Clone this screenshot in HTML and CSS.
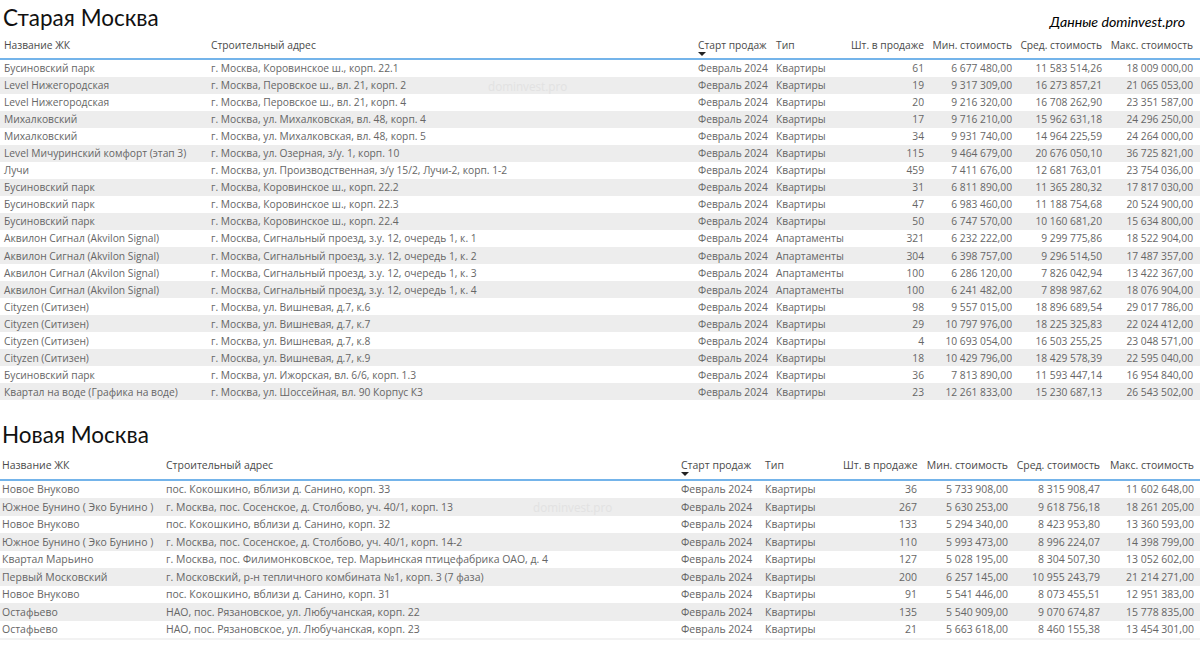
FILE: index.html
```html
<!DOCTYPE html>
<html lang="ru">
<head>
<meta charset="utf-8">
<title>Старая и Новая Москва</title>
<link rel="stylesheet" href="styles.css">
</head>
<body>
<section class="report old">
  <header class="title-bar">
    <h1>Старая Москва</h1>
    <p class="source">Данные dominvest.pro</p>
  </header>
  <div class="head row">
    <span>Название ЖК</span><span>Строительный адрес</span><span class="sorted">Старт продаж</span><span>Тип</span><span class="num">Шт. в продаже</span><span class="num">Мин. стоимость</span><span class="num">Сред. стоимость</span><span class="num">Макс. стоимость</span>
  </div>
  <div class="body">
    <span class="mark">dominvest.pro</span>
    <div class="row"><span>Бусиновский парк</span><span>г. Москва, Коровинское ш., корп. 22.1</span><span>Февраль 2024</span><span>Квартиры</span><span class="num">61</span><span class="num">6 677 480,00</span><span class="num">11 583 514,26</span><span class="num">18 009 000,00</span></div>
    <div class="row"><span>Level Нижегородская</span><span>г. Москва, Перовское ш., вл. 21, корп. 2</span><span>Февраль 2024</span><span>Квартиры</span><span class="num">19</span><span class="num">9 317 309,00</span><span class="num">16 273 857,21</span><span class="num">21 065 053,00</span></div>
    <div class="row"><span>Level Нижегородская</span><span>г. Москва, Перовское ш., вл. 21, корп. 4</span><span>Февраль 2024</span><span>Квартиры</span><span class="num">20</span><span class="num">9 216 320,00</span><span class="num">16 708 262,90</span><span class="num">23 351 587,00</span></div>
    <div class="row"><span>Михалковский</span><span>г. Москва, ул. Михалковская, вл. 48, корп. 4</span><span>Февраль 2024</span><span>Квартиры</span><span class="num">17</span><span class="num">9 716 210,00</span><span class="num">15 962 631,18</span><span class="num">24 296 250,00</span></div>
    <div class="row"><span>Михалковский</span><span>г. Москва, ул. Михалковская, вл. 48, корп. 5</span><span>Февраль 2024</span><span>Квартиры</span><span class="num">34</span><span class="num">9 931 740,00</span><span class="num">14 964 225,59</span><span class="num">24 264 000,00</span></div>
    <div class="row"><span>Level Мичуринский комфорт (этап 3)</span><span>г. Москва, ул. Озерная, з/у. 1, корп. 10</span><span>Февраль 2024</span><span>Квартиры</span><span class="num">115</span><span class="num">9 464 679,00</span><span class="num">20 676 050,10</span><span class="num">36 725 821,00</span></div>
    <div class="row"><span>Лучи</span><span>г. Москва, ул. Производственная, з/у 15/2, Лучи-2, корп. 1-2</span><span>Февраль 2024</span><span>Квартиры</span><span class="num">459</span><span class="num">7 411 676,00</span><span class="num">12 681 763,01</span><span class="num">23 754 036,00</span></div>
    <div class="row"><span>Бусиновский парк</span><span>г. Москва, Коровинское ш., корп. 22.2</span><span>Февраль 2024</span><span>Квартиры</span><span class="num">31</span><span class="num">6 811 890,00</span><span class="num">11 365 280,32</span><span class="num">17 817 030,00</span></div>
    <div class="row"><span>Бусиновский парк</span><span>г. Москва, Коровинское ш., корп. 22.3</span><span>Февраль 2024</span><span>Квартиры</span><span class="num">47</span><span class="num">6 983 460,00</span><span class="num">11 188 754,68</span><span class="num">20 524 900,00</span></div>
    <div class="row"><span>Бусиновский парк</span><span>г. Москва, Коровинское ш., корп. 22.4</span><span>Февраль 2024</span><span>Квартиры</span><span class="num">50</span><span class="num">6 747 570,00</span><span class="num">10 160 681,20</span><span class="num">15 634 800,00</span></div>
    <div class="row"><span>Аквилон Сигнал (Akvilon Signal)</span><span>г. Москва, Сигнальный проезд, з.у. 12, очередь 1, к. 1</span><span>Февраль 2024</span><span>Апартаменты</span><span class="num">321</span><span class="num">6 232 222,00</span><span class="num">9 299 775,86</span><span class="num">18 522 904,00</span></div>
    <div class="row"><span>Аквилон Сигнал (Akvilon Signal)</span><span>г. Москва, Сигнальный проезд, з.у. 12, очередь 1, к. 2</span><span>Февраль 2024</span><span>Апартаменты</span><span class="num">304</span><span class="num">6 398 757,00</span><span class="num">9 296 514,50</span><span class="num">17 487 357,00</span></div>
    <div class="row"><span>Аквилон Сигнал (Akvilon Signal)</span><span>г. Москва, Сигнальный проезд, з.у. 12, очередь 1, к. 3</span><span>Февраль 2024</span><span>Апартаменты</span><span class="num">100</span><span class="num">6 286 120,00</span><span class="num">7 826 042,94</span><span class="num">13 422 367,00</span></div>
    <div class="row"><span>Аквилон Сигнал (Akvilon Signal)</span><span>г. Москва, Сигнальный проезд, з.у. 12, очередь 1, к. 4</span><span>Февраль 2024</span><span>Апартаменты</span><span class="num">100</span><span class="num">6 241 482,00</span><span class="num">7 898 987,62</span><span class="num">18 076 904,00</span></div>
    <div class="row"><span>Cityzen (Ситизен)</span><span>г. Москва, ул. Вишневая, д.7, к.6</span><span>Февраль 2024</span><span>Квартиры</span><span class="num">98</span><span class="num">9 557 015,00</span><span class="num">18 896 689,54</span><span class="num">29 017 786,00</span></div>
    <div class="row"><span>Cityzen (Ситизен)</span><span>г. Москва, ул. Вишневая, д.7, к.7</span><span>Февраль 2024</span><span>Квартиры</span><span class="num">29</span><span class="num">10 797 976,00</span><span class="num">18 225 325,83</span><span class="num">22 024 412,00</span></div>
    <div class="row"><span>Cityzen (Ситизен)</span><span>г. Москва, ул. Вишневая, д.7, к.8</span><span>Февраль 2024</span><span>Квартиры</span><span class="num">4</span><span class="num">10 693 054,00</span><span class="num">16 503 255,25</span><span class="num">23 048 571,00</span></div>
    <div class="row"><span>Cityzen (Ситизен)</span><span>г. Москва, ул. Вишневая, д.7, к.9</span><span>Февраль 2024</span><span>Квартиры</span><span class="num">18</span><span class="num">10 429 796,00</span><span class="num">18 429 578,39</span><span class="num">22 595 040,00</span></div>
    <div class="row"><span>Бусиновский парк</span><span>г. Москва, ул. Ижорская, вл. 6/6, корп. 1.3</span><span>Февраль 2024</span><span>Квартиры</span><span class="num">36</span><span class="num">7 813 890,00</span><span class="num">11 593 447,14</span><span class="num">16 954 840,00</span></div>
    <div class="row"><span>Квартал на воде (Графика на воде)</span><span>г. Москва, ул. Шоссейная, вл. 90 Корпус К3</span><span>Февраль 2024</span><span>Квартиры</span><span class="num">23</span><span class="num">12 261 833,00</span><span class="num">15 230 687,13</span><span class="num">26 543 502,00</span></div>
  </div>
</section>
<section class="report new">
  <header class="title-bar">
    <h1>Новая Москва</h1>
  </header>
  <div class="head row">
    <span>Название ЖК</span><span>Строительный адрес</span><span class="sorted">Старт продаж</span><span>Тип</span><span class="num">Шт. в продаже</span><span class="num">Мин. стоимость</span><span class="num">Сред. стоимость</span><span class="num">Макс. стоимость</span>
  </div>
  <div class="body">
    <span class="mark">dominvest.pro</span>
    <div class="row"><span>Новое Внуково</span><span>пос. Кокошкино, вблизи д. Санино, корп. 33</span><span>Февраль 2024</span><span>Квартиры</span><span class="num">36</span><span class="num">5 733 908,00</span><span class="num">8 315 908,47</span><span class="num">11 602 648,00</span></div>
    <div class="row"><span>Южное Бунино ( Эко Бунино )</span><span>г. Москва, пос. Сосенское, д. Столбово, уч. 40/1, корп. 13</span><span>Февраль 2024</span><span>Квартиры</span><span class="num">267</span><span class="num">5 630 253,00</span><span class="num">9 618 756,18</span><span class="num">18 261 205,00</span></div>
    <div class="row"><span>Новое Внуково</span><span>пос. Кокошкино, вблизи д. Санино, корп. 32</span><span>Февраль 2024</span><span>Квартиры</span><span class="num">133</span><span class="num">5 294 340,00</span><span class="num">8 423 953,80</span><span class="num">13 360 593,00</span></div>
    <div class="row"><span>Южное Бунино ( Эко Бунино )</span><span>г. Москва, пос. Сосенское, д. Столбово, уч. 40/1, корп. 14-2</span><span>Февраль 2024</span><span>Квартиры</span><span class="num">110</span><span class="num">5 993 473,00</span><span class="num">8 996 224,07</span><span class="num">14 398 799,00</span></div>
    <div class="row"><span>Квартал Марьино</span><span>г. Москва, пос. Филимонковское, тер. Марьинская птицефабрика ОАО, д. 4</span><span>Февраль 2024</span><span>Квартиры</span><span class="num">127</span><span class="num">5 028 195,00</span><span class="num">8 304 507,30</span><span class="num">13 052 602,00</span></div>
    <div class="row"><span>Первый Московский</span><span>г. Московский, р-н тепличного комбината №1, корп. 3 (7 фаза)</span><span>Февраль 2024</span><span>Квартиры</span><span class="num">200</span><span class="num">6 257 145,00</span><span class="num">10 955 243,79</span><span class="num">21 214 271,00</span></div>
    <div class="row"><span>Новое Внуково</span><span>пос. Кокошкино, вблизи д. Санино, корп. 31</span><span>Февраль 2024</span><span>Квартиры</span><span class="num">91</span><span class="num">5 541 446,00</span><span class="num">8 073 455,51</span><span class="num">12 951 383,00</span></div>
    <div class="row"><span>Остафьево</span><span>НАО, пос. Рязановское, ул. Любучанская, корп. 22</span><span>Февраль 2024</span><span>Квартиры</span><span class="num">135</span><span class="num">5 540 909,00</span><span class="num">9 070 674,87</span><span class="num">15 778 835,00</span></div>
    <div class="row"><span>Остафьево</span><span>НАО, пос. Рязановское, ул. Любучанская, корп. 23</span><span>Февраль 2024</span><span>Квартиры</span><span class="num">21</span><span class="num">5 663 618,00</span><span class="num">8 460 155,38</span><span class="num">13 454 301,00</span></div>
  </div>
</section>
</body>
</html>
```
FILE: styles.css
```css
* { box-sizing: border-box; }
html, body { margin: 0; padding: 0; background: #fff; }
body {
  width: 1200px;
  height: 654px;
  overflow: hidden;
  font-family: "Open Sans", "Noto Sans", sans-serif;
  font-size: 10.25px;
  color: #666;
}
.report { display: flex; flex-direction: column; }
.title-bar { display: flex; justify-content: space-between; align-items: center; }
h1 {
  margin: 0;
  font-family: "Lato", "Noto Sans", sans-serif;
  font-weight: 400;
  font-size: 22.5px;
  line-height: 28px;
  color: #111;
}
.source {
  margin: 0;
  font-family: "Lato", "Noto Sans", sans-serif;
  font-style: italic;
  font-size: 14.2px;
  line-height: 20px;
  color: #000;
}
.row {
  display: grid;
  align-items: center;
  white-space: nowrap;
}
.row > span { min-width: 0; }
.num { text-align: right; }
.head { color: #4a4a4a; border-bottom: 2px solid #74b4ea; padding-bottom: 1.5px; }
.head .sorted { position: relative; }
.head .sorted::after {
  content: "";
  position: absolute;
  left: 0;
  top: 14px;
  border-left: 4px solid transparent;
  border-right: 4px solid transparent;
  border-top: 4px solid #222;
}
.body { position: relative; }
.body .row:nth-of-type(even) { background: #ededed; }
.mark {
  position: absolute;
  font-size: 11.7px;
  color: #e2e2e2;
  z-index: 1;
}

.old { height: 417px; }
.old .title-bar { height: 34px; padding: 2px 15px 0 3px; }
.old .source { position: relative; top: 4px; }
.old .row { grid-template-columns: 207px 487px 78px 74px 74px 88px 90px 91px; padding-left: 4px; }
.old .head { height: 25.5px; }
.old .body .row { height: 17.05px; }
.old .mark { left: 488px; top: 18px; }

.new { font-size: 10.47px; }
.new .title-bar { height: 36px; padding: 0 0 0 2px; }
.new .row { grid-template-columns: 164px 515px 84px 78px 74px 91px 92px 94px; padding-left: 2px; }
.new .head { height: 27.5px; }
.new .body { border-bottom: 2px solid #f2f2f2; }
.new .body .row { height: 17.5px; }
.new .mark { left: 533px; top: 18px; }
```
